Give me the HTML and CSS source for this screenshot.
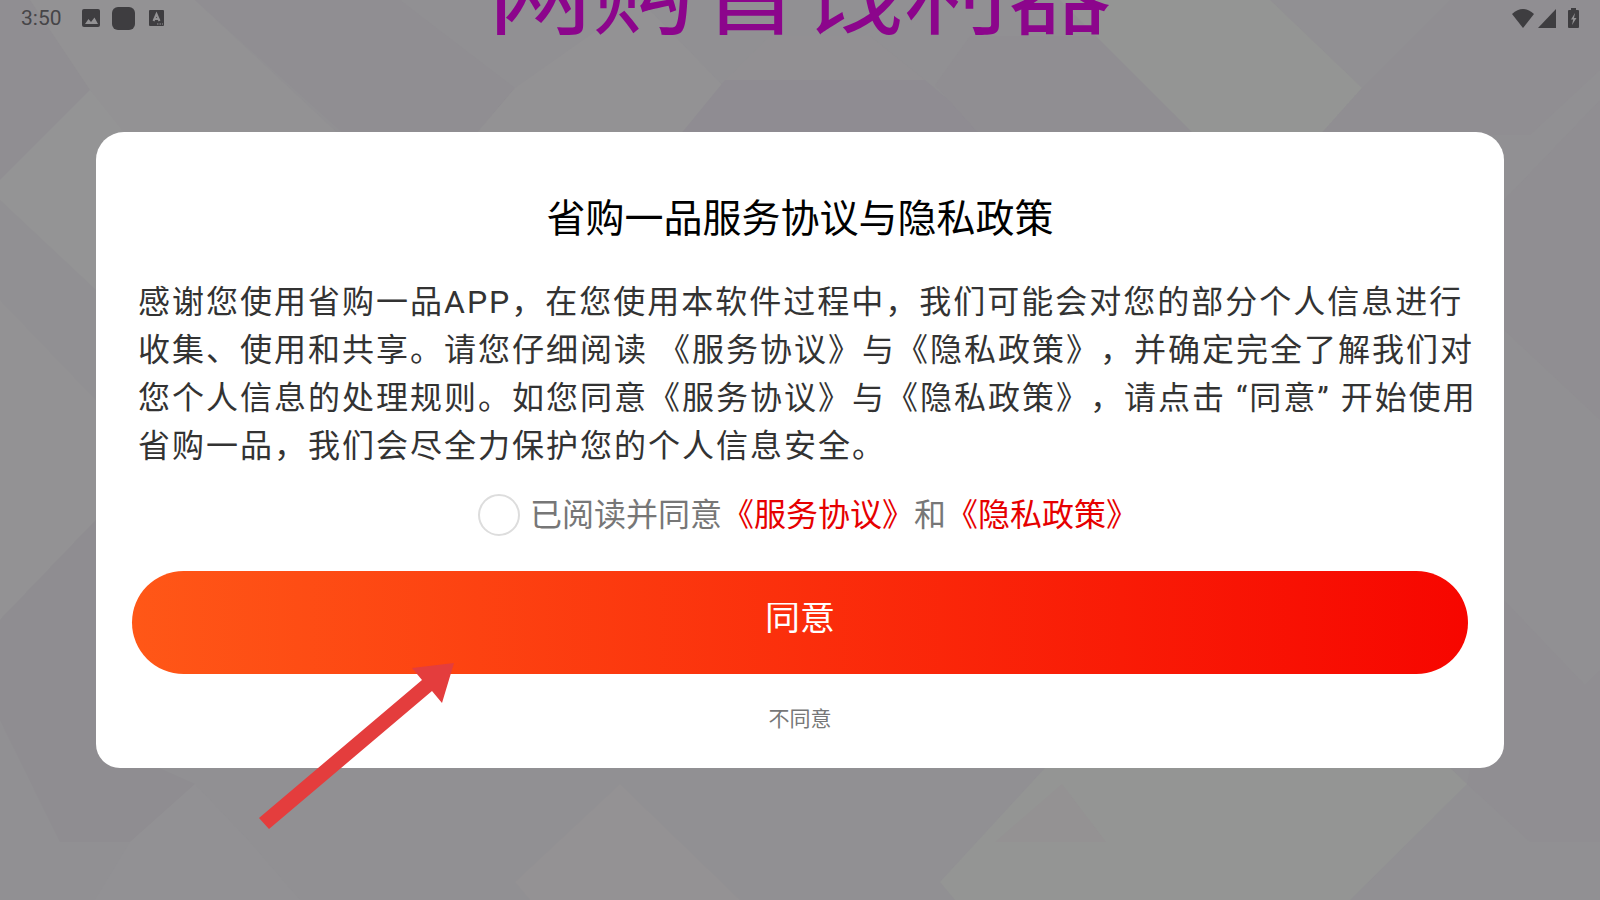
FILE: index.html
```html
<!DOCTYPE html>
<html lang="zh-CN">
<head>
    <meta charset="UTF-8">
    <meta name="viewport" content="width=device-width, initial-scale=1.0">
    <title>省购一品服务协议与隐私政策</title>
    <link rel="stylesheet" href="styles.css">
</head>
<body>
    <!-- Splash background -->
    <svg class="backdrop" viewBox="0 0 1600 900" preserveAspectRatio="xMidYMid slice" aria-hidden="true">
        <polygon points="0,0 40,0 90,90 0,180" fill="#908e92"/>
        <polygon points="90,90 132,132 96,168 96,290 0,200 0,180" fill="#949495"/>
        <polygon points="30,0 195,0 345,140 130,140 90,90" fill="#939294"/>
        <polygon points="195,0 400,0 515,88 475,135 345,135" fill="#908e92"/>
        <polygon points="515,88 640,0 725,88 680,135 475,135" fill="#939294"/>
        <polygon points="725,80 925,80 990,135 680,135" fill="#8f8c92"/>
        <polygon points="770,36 870,36 925,80 725,80" fill="#929093"/>
        <polygon points="970,36 1100,36 1195,135 980,135 935,85" fill="#908e92"/>
        <polygon points="1060,0 1270,0 1362,88 1320,135 1195,135" fill="#949594"/>
        <polygon points="1450,0 1600,0 1600,70 1530,135 1320,135 1362,88" fill="#908e92"/>
        <polygon points="0,300 96,400 96,520 0,620" fill="#939294"/>
        <polygon points="0,620 96,520 96,740 195,784 130,842 60,842 0,720" fill="#8f8d91"/>
        <polygon points="195,784 250,842 300,900 95,900 130,842" fill="#929194"/>
        <polygon points="620,784 740,900 530,900 515,882" fill="#949294"/>
        <polygon points="1045,768 1450,768 1467,784 1350,900 955,900 940,882" fill="#949594"/>
        <polygon points="1062,784 1106,842 995,842" fill="#949293"/>
        <polygon points="1504,200 1600,100 1600,420 1504,330" fill="#908e92"/>
        <polygon points="1504,600 1585,685 1600,670 1600,842 1530,842 1467,784" fill="#908e92"/>
    </svg>

    <header class="status-bar">
        <div class="status-group">
            <span class="clock">3:50</span>
            <svg class="icon-picture" width="18" height="18" viewBox="0 0 18 18" aria-hidden="true">
                <path d="M2 0h14a2 2 0 0 1 2 2v14a2 2 0 0 1-2 2H2a2 2 0 0 1-2-2V2a2 2 0 0 1 2-2z" fill="#3e3d40"/>
                <path d="M3 15l3.500-5 2.500 3 3.500-4.500L16 15z" fill="#939294"/>
            </svg>
            <span class="app-dot"></span>
            <svg width="15" height="16" viewBox="0 0 15 16" aria-hidden="true">
                <rect width="15" height="16" rx="1" fill="#3e3d40"/>
                <path d="M4.500 11L7.500 4l3 7M5.500 9h4" fill="none" stroke="#939294" stroke-width="2"/>
                <path d="M8 14h1.500M10.500 14H12M13 14h1" stroke="#939294" stroke-width="1"/>
            </svg>
        </div>
        <div class="status-group">
            <svg width="22" height="19" viewBox="0 0 22 19" aria-hidden="true">
                <path d="M0 5Q11-5 22 5L11 19z" fill="#3e3d40"/>
            </svg>
            <svg class="icon-signal" width="18" height="19" viewBox="0 0 18 19" aria-hidden="true">
                <path d="M18 0v19H0z" fill="#3e3d40"/>
            </svg>
            <svg class="icon-battery" width="11" height="20" viewBox="0 0 11 20" aria-hidden="true">
                <path d="M3 0h5v2h2a1 1 0 0 1 1 1v16a1 1 0 0 1-1 1H1a1 1 0 0 1-1-1V3a1 1 0 0 1 1-1h2z" fill="#3e3d40"/>
                <path d="M7 5l-4 6.500h2.200L4 17l4.500-7H6z" fill="#939294"/>
            </svg>
        </div>
    </header>

    <p class="slogan">网购省钱利器</p>

    <main>
        <section class="dialog" role="dialog" aria-labelledby="dialog-title">
            <h1 id="dialog-title">省购一品服务协议与隐私政策</h1>
            <p class="terms">感谢您使用省购一品APP，在您使用本软件过程中，我们可能会对您的部分个人信息进行收集、使用和共享。请您仔细阅读 《服务协议》与《隐私政策》，并确定完全了解我们对您个人信息的处理规则。如您同意《服务协议》与《隐私政策》，请点击 “同意” 开始使用省购一品，我们会尽全力保护您的个人信息安全。</p>
            <div class="consent">
                <input type="checkbox" id="consent-check">
                <label for="consent-check">已阅读并同意<a href="#service">《服务协议》</a>和<a href="#privacy">《隐私政策》</a></label>
            </div>
            <button class="btn-agree" type="button"><span>同意</span></button>
            <button class="btn-disagree" type="button">不同意</button>

            <!-- Pointer to the agree button -->
            <svg class="pointer" width="195" height="166" viewBox="0 0 195 166" aria-hidden="true">
                <polygon points="0,155 163,17 153,5 195,0 183,40 173,28 10,166" fill="#e43d3d"/>
            </svg>
        </section>
    </main>
</body>
</html>
```

FILE: styles.css
```css
* {
    margin: 0;
    padding: 0;
    box-sizing: border-box;
}

body {
    min-height: 100vh;
    background: #919093;
    font-family: Roboto, "Noto Sans CJK SC", sans-serif;
    text-spacing-trim: space-all;
    overflow: hidden;
}

button {
    border: none;
    background: none;
    font-family: inherit;
    cursor: pointer;
}

.backdrop {
    position: absolute;
    top: 0;
    left: 0;
    width: 100%;
    height: 100%;
    z-index: -1;
}

/* Status bar, lies over the splash page */
.status-bar {
    position: absolute;
    top: 0;
    left: 0;
    display: flex;
    justify-content: space-between;
    align-items: center;
    width: 100%;
    height: 36px;
    padding: 0 21px;
}

.status-group {
    display: flex;
    align-items: center;
}

.clock {
    color: #464548;
    font-size: 21px;
    line-height: 36px;
}

.icon-picture {
    margin-left: 20px;
}

.app-dot {
    width: 23px;
    height: 23px;
    margin: 0 14px 0 12px;
    border-radius: 6px;
    background: #3e3d40;
}

.icon-signal {
    margin-left: 4px;
}

.icon-battery {
    margin-left: 12px;
}

/* Slogan of the splash page, scrolled half out of view */
.slogan {
    position: absolute;
    top: -68px;
    left: 0;
    width: 100%;
    color: #8c058c;
    font-size: 104px;
    line-height: 120px;
    text-align: center;
    z-index: -1;
}

/* Dialog */
main {
    display: flex;
    align-items: center;
    min-height: 100vh;
    padding: 0 6%;
}

.dialog {
    position: relative;
    display: flex;
    flex-direction: column;
    align-items: center;
    width: 100%;
    padding: 60px 36px 34px;
    border-radius: 28px 28px 24px 24px;
    background: #fff;
}

.dialog h1 {
    color: #000;
    font-size: 39px;
    font-weight: 400;
    line-height: 54px;
}

.terms {
    align-self: stretch;
    margin: 32px -12px 24px 6px;
    color: #333;
    font-size: 32px;
    letter-spacing: 2px;
    line-height: 48px;
}

.consent {
    display: flex;
    align-items: center;
    gap: 10px;
    padding-left: 16px;
    color: #777;
    font-size: 32px;
    line-height: 42px;
}

.consent input {
    appearance: none;
    width: 42px;
    height: 42px;
    border: 2px solid #ddd;
    border-radius: 50%;
    background: #fff;
}

.consent input:checked {
    border-color: #e60000;
    background: #e60000;
}

.consent a {
    color: #e60000;
    text-decoration: none;
}

.btn-agree {
    display: flex;
    justify-content: center;
    align-self: stretch;
    height: 103px;
    margin: 35px 0 30px;
    padding-top: 32px;
    border-radius: 52px;
    background: linear-gradient(90deg, #ff5717, #f70600);
    color: #fff;
    font-size: 35px;
}

.btn-agree span {
    height: 34px;
    line-height: 32px;
    overflow: hidden;
}

.btn-disagree {
    color: #777;
    font-size: 21px;
    line-height: 30px;
}

.pointer {
    position: absolute;
    top: 531px;
    left: 163px;
    pointer-events: none;
}
```
